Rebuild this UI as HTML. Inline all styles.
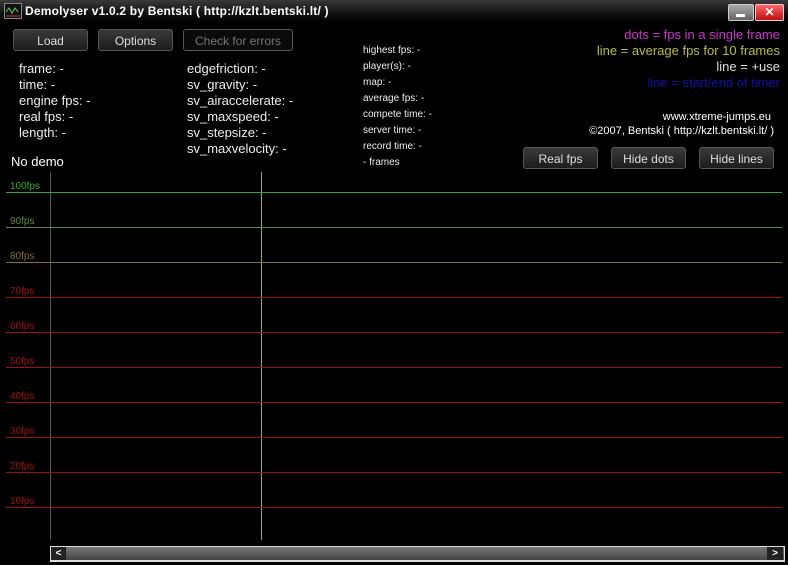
<!DOCTYPE html><html><head><style>
body{margin:0;width:788px;height:565px;background:#000;position:relative;overflow:hidden;font-family:"Liberation Sans",sans-serif;}
.a{position:absolute;white-space:nowrap}
.tb{left:0;top:0;width:788px;height:22px;background:linear-gradient(#3a3a3a,#111 60%,#000)}
.btn{position:absolute;height:22px;border:1px solid #555;border-radius:3px;background:linear-gradient(#3a3a3a,#1c1c1c);color:#ddd;font-size:12px;text-align:center;line-height:22px;box-sizing:border-box}
.t{color:#eee;font-size:13px;line-height:16px}
.s{color:#eee;font-size:10px;line-height:16px}
</style></head><body>
<div class="a tb"></div>
<div class="a" style="left:4px;top:3px;width:16px;height:14px;border:1px solid #888;background:#111"><svg width="16" height="14"><path d="M1 8 L4 4 L7 9 L10 4 L13 8" stroke="#6c6" fill="none"/><line x1="1" y1="12" x2="15" y2="12" stroke="#c33"/></svg></div>
<div class="a" style="left:25px;top:4px;color:#fff;font-weight:bold;font-size:12px;letter-spacing:0.2px">Demolyser v1.0.2 by Bentski ( http://kzlt.bentski.lt/ )</div>
<div class="a" style="left:728px;top:4px;width:24px;height:15px;border:1px solid #ccc;border-radius:2px;background:linear-gradient(#aaa,#666)"><div style="position:absolute;left:7px;top:9px;width:9px;height:3px;background:#fff"></div></div>
<div class="a" style="left:755px;top:4px;width:27px;height:15px;border:1px solid #ecc;border-radius:2px;background:linear-gradient(#f66,#b11);color:#fff;font-size:12px;font-weight:bold;text-align:center;line-height:15px">✕</div>
<div class="btn" style="left:13px;top:29px;width:75px">Load</div>
<div class="btn" style="left:98px;top:29px;width:75px">Options</div>
<div class="btn" style="left:183px;top:29px;width:110px;color:#777;background:#0a0a0a">Check for errors</div>
<div class="a t" style="left:19px;top:61px">frame: -<br>time: -<br>engine fps: -<br>real fps: -<br>length: -</div>
<div class="a t" style="left:187px;top:61px">edgefriction: -<br>sv_gravity: -<br>sv_airaccelerate: -<br>sv_maxspeed: -<br>sv_stepsize: -<br>sv_maxvelocity: -</div>
<div class="a s" style="left:363px;top:43px">highest fps: -<br>player(s): -<br>map: -<br>average fps: -<br>compete time: -<br>server time: -<br>record time: -<br>- frames</div>
<div class="a" style="left:11px;top:154px;color:#fff;font-size:13px">No demo</div>
<div class="a" style="right:8px;top:27px;font-size:13px;line-height:16px;text-align:right">
<span style="color:#c3c">dots = fps in a single frame</span><br><span style="color:#bb4">line = average fps for 10 frames</span><br><span style="color:#ddd">line = +use</span><br><span style="color:#11a">line = start/end of timer</span></div>
<div class="a" style="right:17px;top:109px;color:#fff;font-size:11px;line-height:16px;text-align:right">www.xtreme-jumps.eu</div>
<div class="a" style="right:14px;top:123px;color:#fff;font-size:11px;line-height:16px">©2007, Bentski ( http://kzlt.bentski.lt/ )</div>
<div class="btn" style="left:523px;top:147px;width:75px">Real fps</div>
<div class="btn" style="left:611px;top:147px;width:75px">Hide dots</div>
<div class="btn" style="left:699px;top:147px;width:75px">Hide lines</div>
<svg class="a" style="left:0;top:0" width="788" height="565" font-family="Liberation Sans, sans-serif" font-size="10" shape-rendering="crispEdges">
<rect x="50" y="172" width="1" height="368" fill="#555"/>
<rect x="261" y="172" width="1" height="368" fill="#9a6"/>
<rect x="6" width="776" height="1" y="192" fill="#3a3"/>
<rect x="6" width="776" height="1" y="227" fill="#5a8a3a"/>
<rect x="6" width="776" height="1" y="262" fill="#8a6a3a"/>
<rect x="6" width="776" height="1" y="297" fill="#a01010"/>
<rect x="6" width="776" height="1" y="332" fill="#a01010"/>
<rect x="6" width="776" height="1" y="367" fill="#a01010"/>
<rect x="6" width="776" height="1" y="402" fill="#a01010"/>
<rect x="6" width="776" height="1" y="437" fill="#a01010"/>
<rect x="6" width="776" height="1" y="472" fill="#a01010"/>
<rect x="6" width="776" height="1" y="507" fill="#a01010"/>
<text x="10" y="189" fill="#3a3">100fps</text>
<text x="10" y="224" fill="#5a8a3a">90fps</text>
<text x="10" y="259" fill="#8a6a3a">80fps</text>
<text x="10" y="294" fill="#a01010">70fps</text>
<text x="10" y="329" fill="#a01010">60fps</text>
<text x="10" y="364" fill="#a01010">50fps</text>
<text x="10" y="399" fill="#a01010">40fps</text>
<text x="10" y="434" fill="#a01010">30fps</text>
<text x="10" y="469" fill="#a01010">20fps</text>
<text x="10" y="504" fill="#a01010">10fps</text>
</svg>
<div class="a" style="left:50px;top:546px;width:733px;height:13px;border:1px solid #ddd;border-bottom-width:2px;background:linear-gradient(#777,#444)"></div>
<div class="a" style="left:51px;top:547px;width:15px;height:13px;background:#222;color:#fff;font-size:10px;font-weight:bold;text-align:center;line-height:13px">&lt;</div>
<div class="a" style="left:767px;top:547px;width:16px;height:13px;background:#222;color:#fff;font-size:10px;font-weight:bold;text-align:center;line-height:13px">&gt;</div>
</body></html>
